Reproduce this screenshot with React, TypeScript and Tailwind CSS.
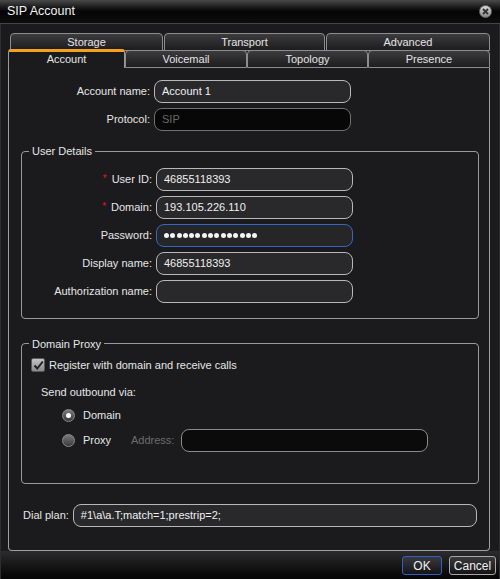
import type { ReactNode } from 'react'

const font = { fontFamily: '"Liberation Sans", Arial, sans-serif' }

function Tab({ label, width, selected }: { label: string; width: string; selected?: boolean }) {
  if (selected) {
    return (
      <div
        className={`${width} h-[19px] shrink-0 rounded-t-[3px] border-x border-t-[3px] border-x-[#9a9a9a] border-t-[#f4a21e] bg-[#1b1b1d] text-center text-[11px] leading-[15px] text-[#e4e4e4]`}
      >
        {label}
      </div>
    )
  }
  return (
    <div
      className={`${width} h-[18px] shrink-0 rounded-t-[4px] border border-[#8c8c8c] bg-gradient-to-b from-[#3c3c3e] to-[#1d1d1f] text-center text-[11px] leading-[16px] text-[#e4e4e4]`}
    >
      {label}
    </div>
  )
}

function Field({
  value,
  width = 'w-[197px]',
  variant = 'normal',
  children,
}: {
  value?: string
  width?: string
  variant?: 'normal' | 'disabled' | 'focus' | 'dark'
  children?: ReactNode
}) {
  const styles = {
    normal: 'border-[#b8b8b8] bg-[#29292b] text-[#f0f0f0]',
    disabled: 'border-[#707070] bg-[#070707] text-[#6a6a6a]',
    focus: 'border-[#3567c4] bg-[#262628] text-[#f0f0f0]',
    dark: 'border-[#8a8a8a] bg-[#0b0b0b] text-[#f0f0f0]',
  }[variant]
  return (
    <div
      className={`${width} flex h-[23px] shrink-0 items-center rounded-[8px] border px-[7px] text-[11px] ${styles}`}
    >
      {children ?? value}
    </div>
  )
}

function Row({
  label,
  labelWidth,
  required,
  children,
}: {
  label: string
  labelWidth: string
  required?: boolean
  children: ReactNode
}) {
  return (
    <div className="flex items-center">
      <div className={`${labelWidth} flex items-center justify-end gap-[5px] pr-[4px] text-[11px] text-[#e6e6e6]`}>
        {required && <span className="text-[10px] leading-[10px] text-[#e01818]">*</span>}
        <span>{label}</span>
      </div>
      {children}
    </div>
  )
}

function Radio({ checked }: { checked?: boolean }) {
  return (
    <div className="flex size-[13px] shrink-0 items-center justify-center rounded-full border border-[#8a8a8a] bg-gradient-to-b from-[#7a7a7a] to-[#3a3a3a]">
      {checked && <div className="size-[5px] rounded-full bg-white" />}
    </div>
  )
}

function Checkbox() {
  return (
    <div className="flex size-[14px] items-center justify-center rounded-[2px] border border-[#5a5a5a] bg-gradient-to-b from-[#c4c4c4] to-[#8a8a8a]">
      <svg width="11" height="11" viewBox="0 0 11 11">
        <path d="M1.5 5.5 L4.3 8.5 L9.8 1.5" fill="none" stroke="#222" strokeWidth="2" />
      </svg>
    </div>
  )
}

export default function App() {
  return (
    <div style={font} className="flex h-[579px] w-[500px] flex-col overflow-hidden bg-[#1b1b1d]">
      {/* title bar */}
      <div className="flex h-[24px] shrink-0 items-center justify-between border-b border-[#454545] bg-gradient-to-b from-[#4a4a4a] via-[#050505] to-[#0e0e0e] pl-[7px] pr-[8px]">
        <span className="text-[12.5px] text-[#f2f2f2]">SIP Account</span>
        <div className="flex size-[13px] items-center justify-center rounded-full border border-[#6a6a6a] bg-gradient-to-b from-[#d8d8d8] to-[#8a8a8a]">
          <svg width="7" height="7" viewBox="0 0 7 7">
            <path d="M1 1 L6 6 M6 1 L1 6" stroke="#333" strokeWidth="1.8" />
          </svg>
        </div>
      </div>

      {/* body */}
      <div className="flex flex-1 flex-col border-x border-[#2e2e30] pl-[7px] pt-[9px]">
        <div className="ml-[2px] flex gap-[1px]">
          <Tab label="Storage" width="w-[153px]" />
          <Tab label="Transport" width="w-[161px]" />
          <Tab label="Advanced" width="w-[164px]" />
        </div>
        <div className="-mt-px flex h-[18px] items-end">
          <Tab label="Account" width="w-[117px]" selected />
          <Tab label="Voicemail" width="w-[122px]" />
          <Tab label="Topology" width="w-[121px]" />
          <Tab label="Presence" width="w-[122px]" />
        </div>

        {/* tab panel */}
        <div className="flex h-[483px] w-[482px] flex-col rounded-b-[4px] border-x border-b border-[#a0a0a0] pt-[12px]">
          <div className="flex flex-col gap-[5px]">
            <Row label="Account name:" labelWidth="w-[145px]">
              <Field value="Account 1" />
            </Row>
            <Row label="Protocol:" labelWidth="w-[145px]">
              <Field value="SIP" variant="disabled" />
            </Row>
          </div>

          <fieldset className="ml-[12px] mt-[12px] w-[458px] rounded-[4px] border border-[#9a9a9a] pb-[15px] pt-[8px]">
            <legend className="ml-[7px] px-[3px] text-[11px] text-[#e6e6e6]">User Details</legend>
            <div className="flex flex-col gap-[5px]">
              <Row label="User ID:" labelWidth="w-[134px]" required>
                <Field value="46855118393" />
              </Row>
              <Row label="Domain:" labelWidth="w-[134px]" required>
                <Field value="193.105.226.110" />
              </Row>
              <Row label="Password:" labelWidth="w-[134px]">
                <Field variant="focus">
                  <div className="flex gap-[1.3px]">
                    {Array.from({ length: 15 }).map((_, i) => (
                      <span key={i} className="size-[5px] rounded-full bg-[#f4f4f4]" />
                    ))}
                  </div>
                </Field>
              </Row>
              <Row label="Display name:" labelWidth="w-[134px]">
                <Field value="46855118393" />
              </Row>
              <Row label="Authorization name:" labelWidth="w-[134px]">
                <Field value="" />
              </Row>
            </div>
          </fieldset>

          <fieldset className="ml-[12px] mt-[17px] w-[458px] rounded-[4px] border border-[#9a9a9a] pb-[31px] pl-[9px] pt-[5px]">
            <legend className="ml-[-2px] px-[3px] text-[11px] text-[#e6e6e6]">Domain Proxy</legend>
            <div className="flex items-center gap-[4px]">
              <Checkbox />
              <span className="text-[11px] text-[#e6e6e6]">Register with domain and receive calls</span>
            </div>
            <div className="ml-[10px] mt-[10px] text-[11px] text-[#e6e6e6]">Send outbound via:</div>
            <div className="ml-[31px] mt-[7px] flex items-center gap-[8px]">
              <Radio checked />
              <span className="text-[11px] text-[#e6e6e6]">Domain</span>
            </div>
            <div className="ml-[31px] mt-[5px] flex items-center">
              <Radio />
              <span className="ml-[8px] w-[48px] text-[11px] text-[#e6e6e6]">Proxy</span>
              <span className="w-[50px] text-[11px] text-[#6c6c6c]">Address:</span>
              <Field width="w-[247px]" variant="dark" value="" />
            </div>
          </fieldset>

          <div className="ml-[14px] mt-[20px] flex items-center gap-[4px]">
            <span className="text-[11px] text-[#e6e6e6]">Dial plan:</span>
            <Field width="w-[404px]" value="#1\a\a.T;match=1;prestrip=2;" />
          </div>
        </div>

        {/* footer */}
        <div className="-ml-[7px] flex flex-1 items-center justify-end gap-[7px] bg-gradient-to-b from-[#2c2c2e] to-[#050505] pr-[3px]">
          <button className="h-[19px] w-[40px] rounded-[3px] border border-[#2f62c0] bg-gradient-to-b from-[#3a3a3c] to-[#151517] text-[12px] text-[#f0f0f0]">
            OK
          </button>
          <button className="h-[19px] w-[47px] rounded-[3px] border border-[#a8a8a8] bg-gradient-to-b from-[#3a3a3c] to-[#151517] text-[12px] text-[#f0f0f0]">
            Cancel
          </button>
        </div>
      </div>
    </div>
  )
}
